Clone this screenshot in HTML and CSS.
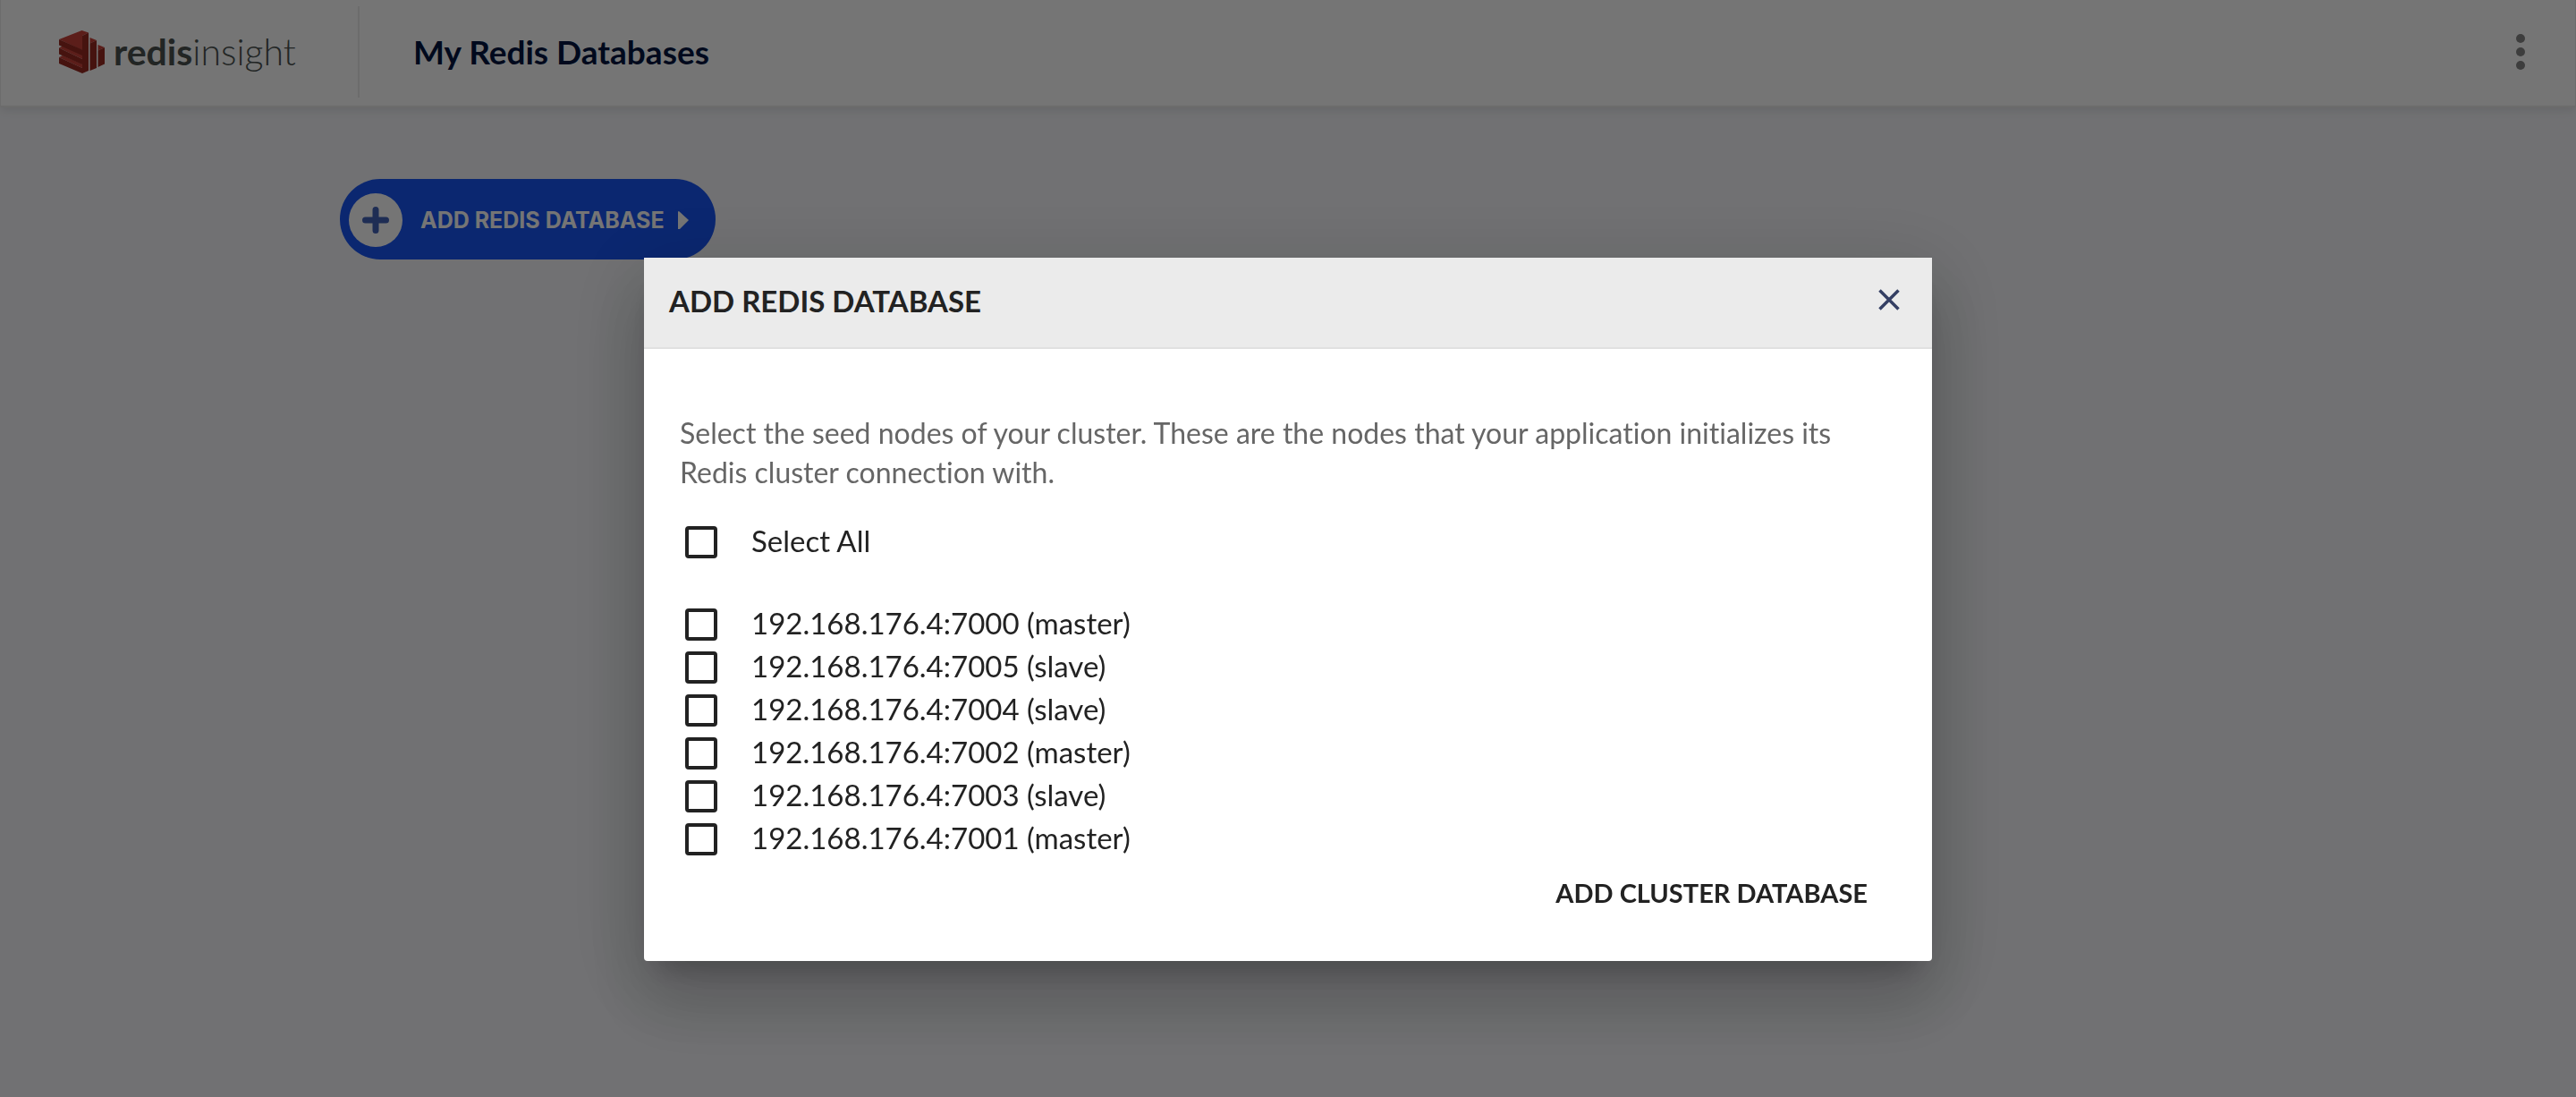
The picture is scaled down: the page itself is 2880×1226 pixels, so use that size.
FILE: index.html
```html
<!DOCTYPE html>
<html lang="en">
<head>
<meta charset="utf-8">
<title>RedisInsight</title>
<link rel="stylesheet" href="styles.css">
</head>
<body>
<header class="topbar">
  <a class="brand" href="#">
    <svg class="brand-mark" viewBox="0 0 51 48" aria-hidden="true">
      <path fill="#c8433a" d="M0 10 25.500 0 33 2.500 26 6V22z"/>
      <path fill="#c8433a" d="M0 19.500 4 17.500 26 27V32zM0 30 4 28 26 37.500V42z"/>
      <path fill="#982a22" d="M0 10 26 21.500V28L0 16.500zM0 19.500 26 32v6L0 26.500zM0 30 26 42v6L0 37z"/>
      <path fill="#982a22" d="M26 6 33 2.500V45L26 48z"/>
      <path fill="#c8433a" d="M34.500 8 42 11 34.500 14.500zM43.500 16 51 19 43.500 22.500z"/>
      <path fill="#982a22" d="M42 11V42L34.500 45V14.500zM51 19V37.500L43.500 41V22.500z"/>
    </svg>
    <span class="brand-name"><b>redis</b>insight</span>
  </a>
  <h1 class="page-title">My Redis Databases</h1>
  <button class="menu" type="button" aria-label="Menu"><i></i><i></i><i></i></button>
</header>
<main class="content">
  <button class="add-button" type="button">
    <svg class="add-icon" viewBox="0 0 60 60" aria-hidden="true"><circle cx="30" cy="30" r="30" fill="#fff"/><path d="M30 18.500v23M18.500 30h23" stroke="#4362b7" stroke-width="7" stroke-linecap="round"/></svg>
    <span>ADD REDIS DATABASE</span>
    <svg class="add-arrow" viewBox="0 0 12 20" aria-hidden="true"><path d="M0 1Q0 0 1 0L12 10 2 20H0z" fill="#fff"/></svg>
  </button>
</main>
<div class="overlay">
  <section class="dialog" role="dialog" aria-modal="true" aria-labelledby="dialog-title">
    <header class="dialog-head">
      <h2 id="dialog-title">ADD REDIS DATABASE</h2>
      <button class="close" type="button" aria-label="Close"><svg viewBox="0 0 24 24" aria-hidden="true"><path d="M1.500 1.500l21 21M22.500 1.500l-21 21" stroke="#343f63" stroke-width="3.500"/></svg></button>
    </header>
    <form class="dialog-body">
      <p class="hint">Select the seed nodes of your cluster. These are the nodes that your application initializes its Redis cluster connection with.</p>
      <label class="option all"><input type="checkbox">Select All</label>
      <label class="option"><input type="checkbox">192.168.176.4:7000 (master)</label>
      <label class="option"><input type="checkbox">192.168.176.4:7005 (slave)</label>
      <label class="option"><input type="checkbox">192.168.176.4:7004 (slave)</label>
      <label class="option"><input type="checkbox">192.168.176.4:7002 (master)</label>
      <label class="option"><input type="checkbox">192.168.176.4:7003 (slave)</label>
      <label class="option"><input type="checkbox">192.168.176.4:7001 (master)</label>
      <button class="submit" type="button">ADD CLUSTER DATABASE</button>
    </form>
  </section>
</div>
</body>
</html>
```
FILE: styles.css
```css
* { box-sizing: border-box; }
body {
  margin: 0;
  min-height: 100vh;
  background: #f6f7fb;
  color: #222;
  font-family: Lato, "Open Sans", sans-serif;
  font-size: 33px;
  font-variant-ligatures: none;
}
h1, h2, p { margin: 0; }
button {
  padding: 0;
  border: 0;
  background: none;
  color: inherit;
  font: inherit;
}
.topbar {
  display: flex;
  align-items: center;
  height: 120px;
  padding: 0 49px 2px 65px;
  background: #fff;
  border: solid #ececec;
  border-width: 0 1px 2px;
  box-shadow: 0 2px 12px rgba(0, 0, 0, .12);
}
.brand {
  display: flex;
  align-items: center;
  gap: 10px;
  width: 336px;
  height: 102px;
  border-right: 2px solid #ececec;
  color: #4b5250;
  text-decoration: none;
}
.brand-mark { width: 51px; height: 48px; }
.brand-name { font-size: 41px; line-height: 48px; font-weight: 300; }
.brand-name b { font-weight: 700; }
.page-title {
  margin-left: 60px;
  color: #021540;
  font-size: 37px;
  line-height: 48px;
}
.menu {
  display: grid;
  gap: 5px;
  margin-left: auto;
  padding: 0 7px;
}
.menu i { width: 10px; height: 10px; border-radius: 50%; background: #868686; }
.content { padding: 80px 380px; }
.add-button {
  display: flex;
  align-items: center;
  width: 420px;
  height: 90px;
  padding: 2px 30px 0 10px;
  border-radius: 45px;
  background: #1855f3;
  color: #fff;
  font: 700 25px/32px Inter, sans-serif;
}
.add-icon { width: 60px; height: 60px; margin-right: 20px; }
.add-arrow { width: 12px; height: 20px; margin-left: auto; }
.overlay {
  position: fixed;
  inset: 0;
  padding-top: 288px;
  background: rgba(0, 0, 0, .54);
}
.dialog {
  width: 50%;
  margin: 0 auto;
  border-radius: 0 0 4px 4px;
  background: #fff;
  box-shadow: 0 22px 30px -14px rgba(0, 0, 0, .2), 0 48px 76px 6px rgba(0, 0, 0, .14), 0 18px 92px 16px rgba(0, 0, 0, .12);
}
.dialog-head {
  display: flex;
  align-items: center;
  justify-content: space-between;
  height: 102px;
  padding: 0 36px 4px 28px;
  border-bottom: 2px solid #e0e0e0;
  background: #ebebeb;
}
.dialog-head h2 { font-size: 33px; line-height: 44px; }
.close { display: grid; padding-bottom: 2px; }
.close svg { width: 24px; height: 24px; }
.dialog-body { display: flex; flex-direction: column; padding: 72px 40px 50px; }
.hint { color: #666; font-size: 32px; line-height: 44px; }
.option {
  display: flex;
  align-items: flex-start;
  gap: 38px;
  height: 48px;
  padding-left: 6px;
  line-height: 44px;
}
.option.all { margin: 32px 0 44px; }
.option input {
  appearance: none;
  width: 36px;
  height: 36px;
  margin: 6px 0 0;
  border: 4px solid #222;
  border-radius: 4px;
}
.submit {
  align-self: flex-end;
  margin: 12px 32px 2px 0;
  font-size: 29px;
  line-height: 48px;
  font-weight: 700;
}
```
